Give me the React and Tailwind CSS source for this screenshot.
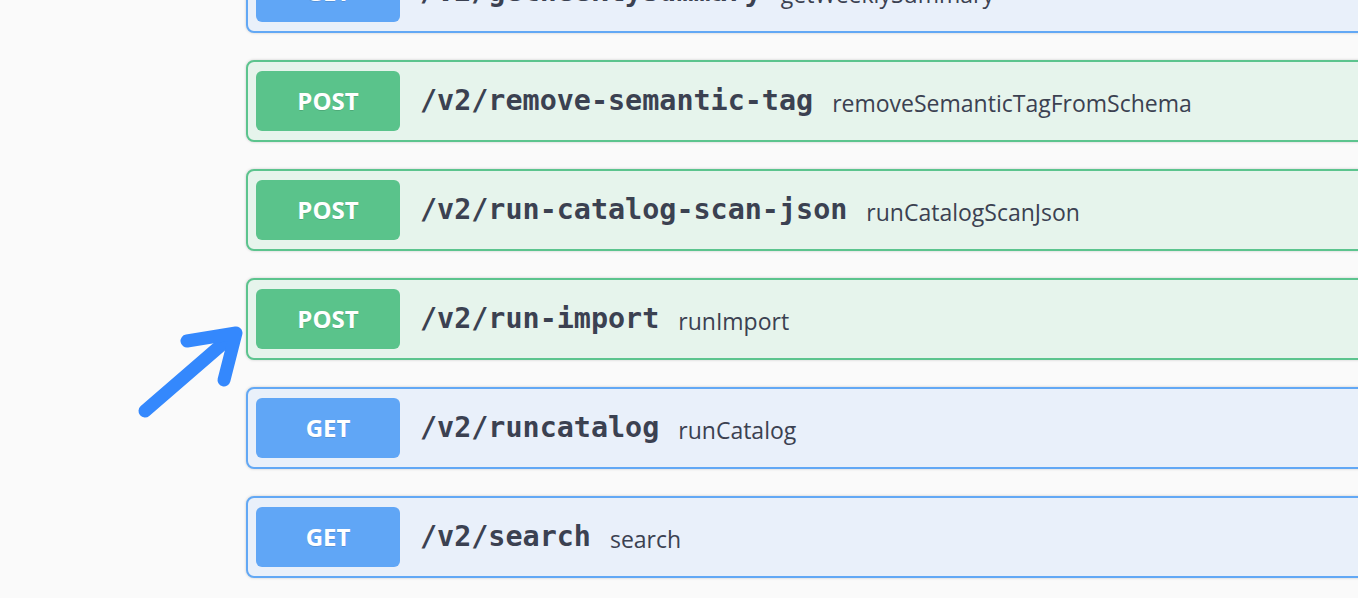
const endpoints = [
  { method: 'GET', path: '/v2/getWeeklySummary', summary: 'getWeeklySummary' },
  { method: 'POST', path: '/v2/remove-semantic-tag', summary: 'removeSemanticTagFromSchema' },
  { method: 'POST', path: '/v2/run-catalog-scan-json', summary: 'runCatalogScanJson' },
  { method: 'POST', path: '/v2/run-import', summary: 'runImport' },
  { method: 'GET', path: '/v2/runcatalog', summary: 'runCatalog' },
  { method: 'GET', path: '/v2/search', summary: 'search' },
]

function Operation({ method, path, summary }) {
  const post = method === 'POST'
  return (
    <div
      className={
        post
          ? 'flex h-[82px] shrink-0 items-center rounded-[8px] border-2 border-[#5cc48e] bg-[#e6f4ec] pl-2 shadow-[0_0_3px_rgba(0,0,0,0.19)]'
          : 'flex h-[82px] shrink-0 items-center rounded-[8px] border-2 border-[#62a8f5] bg-[#e9f0fa] pl-2 shadow-[0_0_3px_rgba(0,0,0,0.19)]'
      }
    >
      <div
        className={
          post
            ? 'flex h-[60px] w-[144px] items-center justify-center rounded-[6px] bg-[#5ac38b] font-["Open_Sans",sans-serif] text-[24px] font-bold text-white [text-shadow:0_1px_0_rgba(0,0,0,0.12)]'
            : 'flex h-[60px] w-[144px] items-center justify-center rounded-[6px] bg-[#60a6f6] font-["Open_Sans",sans-serif] text-[24px] font-bold text-white [text-shadow:0_1px_0_rgba(0,0,0,0.12)]'
        }
      >
        {method}
      </div>
      <span className='ml-5 font-["DejaVu_Sans_Mono",monospace] text-[28.4px] font-bold text-[#3b4151]'>
        {path}
      </span>
      <span className='ml-[19px] pt-[4px] font-["Open_Sans",sans-serif] text-[23px] text-[#3b4151]'>
        {summary}
      </span>
    </div>
  )
}

export default function App() {
  return (
    <div className="relative h-[598px] w-full overflow-hidden bg-[#fafafa]">
      <div className="-mt-[49px] ml-[246px] mr-[-40px] flex flex-col gap-[27px]">
        {endpoints.map((e) => (
          <Operation key={e.path} {...e} />
        ))}
      </div>

      <svg
        className="absolute left-0 top-0"
        width="300"
        height="440"
        viewBox="0 0 300 440"
        fill="none"
      >
        <g stroke="#3488fd" strokeWidth="13" strokeLinecap="round" strokeLinejoin="round">
          <path d="M145 411 L234 334" />
          <path d="M187 341 L236 333 L224 380" />
        </g>
      </svg>
    </div>
  )
}
